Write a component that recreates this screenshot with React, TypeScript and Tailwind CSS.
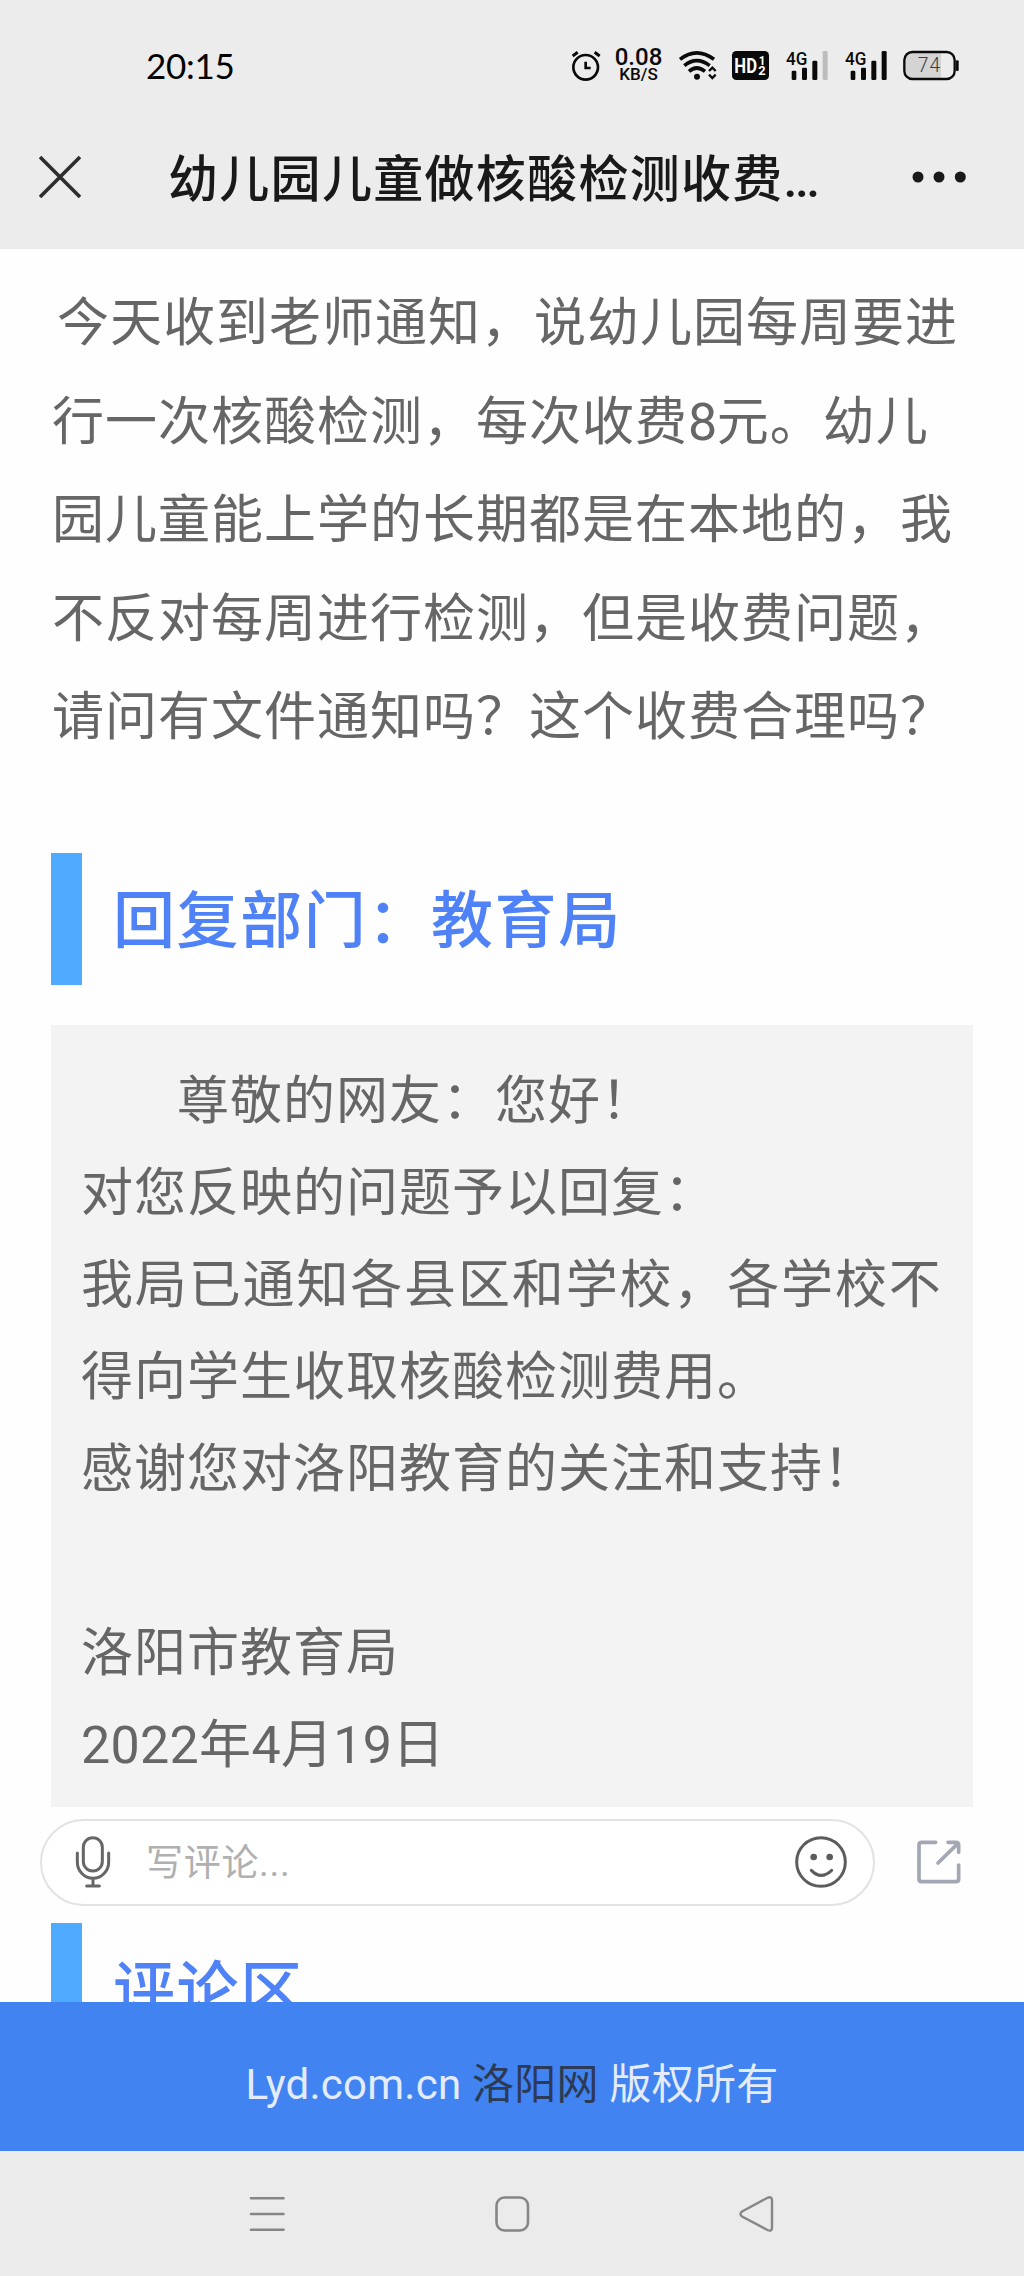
import React from 'react';

const CJK = 'font-[Roboto,"Noto_Sans_CJK_SC",sans-serif]';

function AlarmIcon() {
  return (
    <svg className="h-10 w-8" viewBox="90 45 96 120" fill="none" stroke="#0a0a0a">
      <circle cx="137" cy="112" r="37" strokeWidth="8" />
      <path d="M98 78l15-11M179 78l-15-11" strokeWidth="9" />
      <path d="M137 95v19h15" strokeWidth="8" />
    </svg>
  );
}

function WifiIcon() {
  return (
    <svg className="ml-3.5 h-10 w-[42px]" viewBox="411 45 126 120" fill="none" stroke="#0a0a0a" strokeWidth="11">
      <path d="M420 88Q470 49 522 88" />
      <path d="M433 107Q470 77 509 107" />
      <path d="M447 124Q470 104 495 124" />
      <circle cx="471" cy="140" r="9" fill="#0a0a0a" stroke="none" />
      <path d="M507 123l10-10 10 10M507 134l10 10 10-10" strokeWidth="7" />
    </svg>
  );
}

function HdIcon() {
  return (
    <svg className="ml-3 h-10 w-[39px]" viewBox="573 45 117 120">
      <rect x="576" y="63" width="111" height="87" rx="13" fill="#0a0a0a" />
      <g fill="#fff" fontFamily="Roboto, sans-serif" fontWeight="700">
        <text x="583" y="129" fontSize="62" textLength="68" lengthAdjust="spacingAndGlyphs">HD</text>
        <text x="656" y="104" fontSize="38" textLength="20" lengthAdjust="spacingAndGlyphs">1</text>
        <text x="655" y="136" fontSize="38" textLength="22" lengthAdjust="spacingAndGlyphs">2</text>
      </g>
    </svg>
  );
}

function SignalIcon({ weak = false }: { weak?: boolean }) {
  return (
    <svg className="ml-[15px] h-10 w-11" viewBox="735 45 132 120" fill="#0a0a0a">
      <text x="738" y="104" fontSize="53" textLength="64" lengthAdjust="spacingAndGlyphs" fontFamily="Roboto, sans-serif" fontWeight="500">
        4G
      </text>
      <rect x="755" y="122" width="14" height="28" rx="4" />
      <rect x="786" y="113" width="15" height="37" rx="4" />
      <rect x="817" y="92" width="15" height="58" rx="4" />
      <rect x="848" y="63" width="15" height="87" rx="4" fill={weak ? '#bdbdbd' : '#0a0a0a'} />
    </svg>
  );
}

function BatteryIcon() {
  return (
    <svg className="ml-3.5 h-10 w-[58px]" viewBox="1086 45 174 120">
      <path d="M1203 66h-87q-22 0-22 22v37q0 22 22 22h87z" fill="#d4d4d4" />
      <rect x="1093" y="66" width="151" height="81" rx="24" fill="none" stroke="#0a0a0a" strokeWidth="7" />
      <rect x="1248" y="91" width="8" height="32" rx="3" fill="#0a0a0a" />
      <text x="1133" y="126" fontSize="58" textLength="68" fill="#3a3a3a" fontFamily="Roboto, sans-serif" fontWeight="300">
        74
      </text>
    </svg>
  );
}

function StatusBar() {
  return (
    <div className="flex h-[130px] items-center justify-between pr-16 pl-[146px]">
      <span className="font-[Lato] text-[35px] leading-none tracking-[-0.3px] text-black">20:15</span>
      <div className="flex items-center">
        <AlarmIcon />
        <div className="ml-3 flex w-[49px] flex-col items-center font-[Roboto] font-medium text-[#0a0a0a]">
          <span className="text-[24px] leading-[18px]">0.08</span>
          <span className="text-[17px] leading-[17px]">KB/S</span>
        </div>
        <WifiIcon />
        <HdIcon />
        <SignalIcon weak />
        <SignalIcon />
        <BatteryIcon />
      </div>
    </div>
  );
}

function TitleBar() {
  return (
    <div className="flex h-[119px] items-start pl-[39px]">
      <svg className="mt-[26px] size-[42px]" viewBox="0 0 42 42" stroke="#2e2e2e" strokeWidth="3.6">
        <path d="M1 1l40 40M41 1L1 41" />
      </svg>
      <h1 className={`${CJK} ml-[87px] w-[700px] text-[50px] leading-[101px] font-medium tracking-[1.3px] whitespace-nowrap text-[#191919]`}>
        幼儿园儿童做核酸检测收费<span className="tracking-[-2.6px]">...</span>
      </h1>
      <svg className="mt-[41px] ml-[44px] h-3 w-[56px]" viewBox="0 0 56 12" fill="#191919">
        <circle cx="6" cy="6" r="5.5" />
        <circle cx="27" cy="6" r="5.5" />
        <circle cx="48.300" cy="6" r="5.5" />
      </svg>
    </div>
  );
}

function SectionHeading({ children }: { children: React.ReactNode }) {
  return (
    <div className="flex h-[132px] items-start">
      <div className="h-full w-[31px] bg-[#4fabff]" />
      <h2 className={`${CJK} ml-[31px] text-[62px] leading-[138px] font-medium tracking-[1.6px] text-[#5082f7]`}>
        {children}
      </h2>
    </div>
  );
}

function CommentBar() {
  return (
    <div className="mt-3 flex items-center pl-10">
      <div className="flex h-[87px] w-[835px] items-center rounded-full border-2 border-[#e2e2e2] bg-white pr-[25px] pl-[33px]">
        <svg className="h-[54px] w-[36px]" viewBox="225 106 108 162" fill="none" stroke="#666" strokeWidth="9" strokeLinecap="round">
          <rect x="250" y="114" width="57" height="100" rx="28.5" />
          <path d="M232 160v27a47 49 0 0 0 94 0v-27M279 236v22M260 259h38" />
        </svg>
        <span className={`${CJK} ml-[35px] grow pt-[3px] text-[37px] leading-[60px] tracking-[0.7px] text-[#b0b0b0]`}>写评论...</span>
        <svg className="size-[54px]" viewBox="848 105 162 162" fill="none" stroke="#5c5c5c" strokeWidth="9" strokeLinecap="round">
          <circle cx="929" cy="186" r="73" />
          <path d="M900 211q29 30 61 0" />
          <circle cx="907" cy="171" r="10" fill="#5c5c5c" stroke="none" />
          <circle cx="955" cy="171" r="10" fill="#5c5c5c" stroke="none" />
        </svg>
      </div>
      <svg className="ml-[42px] size-[46px]" viewBox="1218 118 138 138" fill="none" stroke="#a3a6b3" strokeWidth="11" strokeLinecap="round" strokeLinejoin="round">
        <path d="M1274 128h-42q-8 0-8 8v102q0 8 8 8h103q8 0 8-8v-42" />
        <path d="M1311 128h24q8 0 8 8v22M1281 190l60-59" />
      </svg>
    </div>
  );
}

function NavBar() {
  return (
    <nav className="flex h-[125px] items-center bg-[#ebebeb] pl-[249px]">
      <svg className="h-9 w-9" viewBox="0 0 36 36" stroke="#868686" strokeWidth="2.6" strokeLinecap="round">
        <path d="M2 2.2h32.500M2 18h32.500M2 33.700h32.500" />
      </svg>
      <svg className="ml-[209px] h-9 w-9" viewBox="0 0 36 36" fill="none" stroke="#868686" strokeWidth="2.6">
        <rect x="2.500" y="1.500" width="31.500" height="33" rx="8" />
      </svg>
      <svg className="ml-[209px] h-9 w-9" viewBox="0 0 36 36" fill="none" stroke="#868686" strokeWidth="2.4" strokeLinejoin="round">
        <path d="M3 15.500L28.500 1.800Q33 0 33 4.500V31.500Q33 36 28.500 34L3 20.500Q0 18 3 15.500Z" />
      </svg>
    </nav>
  );
}

const QUESTION = [
  '园儿童能上学的长期都是在本地的，我',
  '不反对每周进行检测，但是收费问题，',
  '请问有文件通知吗？这个收费合理吗？',
];

export default function App() {
  return (
    <div className="flex h-[2276px] w-[1024px] flex-col overflow-hidden bg-[#fefefe]">
      <header className="shrink-0 bg-[#ececec]">
        <StatusBar />
        <TitleBar />
      </header>

      <main className="h-[1753px] shrink-0 overflow-hidden">
        <div className={`${CJK} px-[52px] pt-[26px] text-[52px] leading-[98.6px] tracking-[1px] whitespace-nowrap text-[#666]`}>
          <p className="pl-[5px]">今天收到老师通知，说幼儿园每周要进</p>
          <p>
            行一次核酸检测，每次收费<span className="tracking-[-0.6px]">8</span>元。幼儿
          </p>
          {QUESTION.map((line) => (
            <p key={line}>{line}</p>
          ))}
        </div>

        <div className="mt-[85px] px-[51px]">
          <SectionHeading>回复部门：教育局</SectionHeading>
          <div className={`${CJK} mt-[40px] h-[782px] bg-[#f3f3f3] pt-[31px] pl-[30px] text-[52px] leading-[92px] tracking-[1px] whitespace-nowrap text-[#666]`}>
            <p className="pl-[96px]">尊敬的网友：您好！</p>
            <p>对您反映的问题予以回复：</p>
            <p className="tracking-[1.85px]">我局已通知各县区和学校，各学校不</p>
            <p>得向学生收取核酸检测费用。</p>
            <p>感谢您对洛阳教育的关注和支持！</p>
            <p className="mt-[92px]">洛阳市教育局</p>
            <p className="tracking-[0.3px]">2022年4月19日</p>
          </div>
        </div>

        <CommentBar />

        <div className="mt-[17px] px-[51px]">
          <SectionHeading>评论区</SectionHeading>
        </div>
      </main>

      <footer className={`${CJK} flex h-[149px] shrink-0 items-center justify-center bg-[#4183f0] pt-[15px] text-[42px] tracking-[0.25px] whitespace-pre text-[#e4ebfb]`}>
        Lyd.com.cn <span className="text-[#2c3a55]">洛阳网</span> 版权所有
      </footer>
      <NavBar />
    </div>
  );
}
